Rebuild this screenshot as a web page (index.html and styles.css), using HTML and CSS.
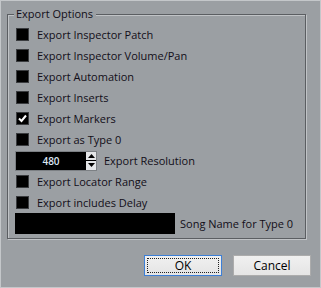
FILE: index.html
```html
<!DOCTYPE html>
<html lang="en">
<head>
    <meta charset="UTF-8">
    <title>Export Options</title>
    <link rel="stylesheet" href="styles.css">
</head>
<body>
    <div class="dialog">

        <!-- Export options group -->
        <div class="group">
            <span class="group-title">Export Options</span>

            <label class="row"><span class="check"></span>Export Inspector Patch</label>
            <label class="row"><span class="check"></span>Export Inspector Volume/Pan</label>
            <label class="row"><span class="check"></span>Export Automation</label>
            <label class="row"><span class="check"></span>Export Inserts</label>
            <label class="row"><span class="check checked">
                <svg width="11" height="11" viewBox="0 0 11 11"><path d="M2 5.5 L4.5 8 L9 2.5" fill="none" stroke="#fff" stroke-width="2"/></svg>
            </span>Export Markers</label>
            <label class="row"><span class="check"></span>Export as Type 0</label>

            <div class="row spin-row">
                <div class="spinner">
                    <div class="spin-value">480</div>
                    <div class="spin-arrows">
                        <div class="spin-btn"><svg width="7" height="4" viewBox="0 0 7 4"><path d="M3.5 0 L7 4 L0 4 Z" fill="#000"/></svg></div>
                        <div class="spin-btn"><svg width="7" height="4" viewBox="0 0 7 4"><path d="M0 0 L7 0 L3.5 4 Z" fill="#000"/></svg></div>
                    </div>
                </div>
                Export Resolution
            </div>

            <label class="row"><span class="check"></span>Export Locator Range</label>
            <label class="row"><span class="check"></span>Export includes Delay</label>

            <div class="row name-row">
                <div class="name-field"></div>
                Song Name for Type 0
            </div>
        </div>

        <!-- Dialog buttons -->
        <div class="buttons">
            <div class="btn btn-default"><span class="focus">OK</span></div>
            <div class="btn">Cancel</div>
        </div>
    </div>
</body>
</html>
```

FILE: styles.css
```css
/* Page */
body {
    margin: 0;
    font-family: "Open Sans", sans-serif;
    font-size: 11px;
    color: #120e18;
}

/* Dialog window */
.dialog {
    width: 321px;
    height: 288px;
    box-sizing: border-box;
    border: 1px solid #c4c7ca;
    background: #9b9fa3;
    padding: 13px 14px 0 6px;
}

/* Group box */
.group {
    position: relative;
    border: 1px solid #5b5e62;
    box-shadow: inset 1px 1px 0 #c0c3c6, 1px 1px 0 #c0c3c6;
    padding: 9px 0 4px 8px;
    display: flex;
    flex-direction: column;
}
.group-title {
    position: absolute;
    top: -8px;
    left: 6px;
    padding: 0 3px 0 2px;
    background: #9b9fa3;
    line-height: 14px;
}

/* Rows */
.row {
    display: flex;
    align-items: center;
    height: 21px;
}
.check {
    width: 13px;
    height: 13px;
    box-sizing: border-box;
    background: #000;
    border: 1px solid #3a3c3f;
    margin-right: 8px;
    display: flex;
    align-items: center;
    justify-content: center;
}

/* Resolution spinner */
.spin-row {
    margin-left: -1px;
}
.spinner {
    display: flex;
    width: 82px;
    height: 20px;
    box-sizing: border-box;
    border: 1px solid #7c8084;
    margin-right: 7px;
}
.spin-value {
    flex: 1;
    background: #000;
    color: #dce6f4;
    font-weight: 600;
    font-size: 10px;
    display: flex;
    align-items: center;
    justify-content: center;
}
.spin-arrows {
    width: 10px;
    display: flex;
    flex-direction: column;
    gap: 1px;
    background: #000;
}
.spin-btn {
    flex: 1;
    background: #e4e6e8;
    display: flex;
    align-items: center;
    justify-content: center;
}

/* Song name field */
.name-row {
    margin-left: -1px;
}
.name-field {
    width: 160px;
    height: 21px;
    background: #000;
    margin-right: 5px;
}

/* Buttons */
.buttons {
    display: flex;
    justify-content: flex-end;
    gap: 11px;
    margin-top: 16px;
    margin-right: -5px;
}
.btn {
    width: 78px;
    height: 21px;
    box-sizing: border-box;
    border: 1px solid #acacac;
    background: linear-gradient(#f0f0f0, #e5e5e5);
    display: flex;
    align-items: center;
    justify-content: center;
    font-size: 12px;
    color: #000;
}
.btn-default {
    border-color: #3c7fd8;
    padding: 2px;
}
.focus {
    flex: 1;
    align-self: stretch;
    border: 1px dotted #222;
    display: flex;
    align-items: center;
    justify-content: center;
}
```
